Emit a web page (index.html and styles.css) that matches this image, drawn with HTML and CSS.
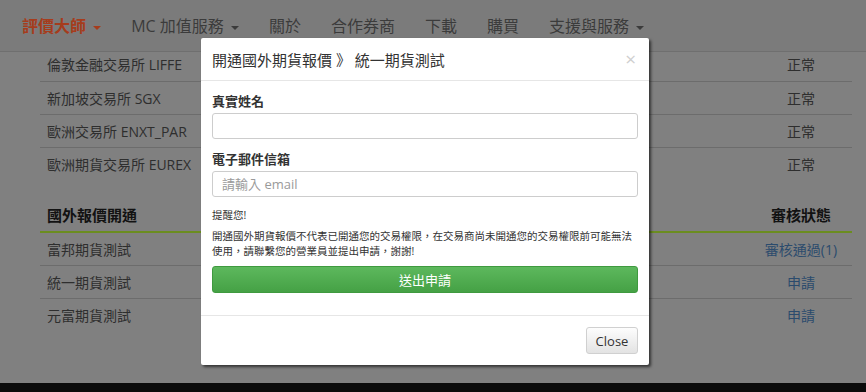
FILE: index.html
```html
<!DOCTYPE html>
<html lang="zh-Hant">
  <head>
    <meta charset="UTF-8" />
    <meta name="viewport" content="width=device-width, initial-scale=1.0" />
    <title>評價大師</title>
    <link rel="stylesheet" href="styles.css">
  </head>
  <body>
    <nav class="topbar">
      <a class="brand">評價大師 <span class="caret"></span></a>
      <a>MC 加值服務 <span class="caret"></span></a>
      <a>關於</a>
      <a>合作券商</a>
      <a>下載</a>
      <a>購買</a>
      <a>支援與服務 <span class="caret"></span></a>
    </nav>

    <main class="content">
      <table class="tbl first">
        <tr><td>倫敦金融交易所 LIFFE</td><td class="stat">正常</td></tr>
        <tr><td>新加坡交易所 SGX</td><td class="stat">正常</td></tr>
        <tr><td>歐洲交易所 ENXT_PAR</td><td class="stat">正常</td></tr>
        <tr><td>歐洲期貨交易所 EUREX</td><td class="stat">正常</td></tr>
      </table>

      <table class="tbl second">
        <tr class="head"><th>國外報價開通</th><th class="stat">審核狀態</th></tr>
        <tr><td>富邦期貨測試</td><td class="stat"><a>審核通過(1)</a></td></tr>
        <tr><td>統一期貨測試</td><td class="stat"><a>申請</a></td></tr>
        <tr><td>元富期貨測試</td><td class="stat"><a>申請</a></td></tr>
      </table>
    </main>
    <footer class="bottombar"></footer>

    <!-- modal -->
    <section class="modal">
      <div class="modal-head">
        <h4>開通國外期貨報價 》 統一期貨測試</h4>
        <span class="luk">&times;</span>
      </div>
      <div class="modal-body">
        <label>真實姓名</label>
        <input type="text">
        <label>電子郵件信箱</label>
        <input type="text" placeholder="請輸入 email">
        <p class="note">提醒您!</p>
        <p class="note-text">開通國外期貨報價不代表已開通您的交易權限，在交易商尚未開通您的交易權限前可能無法使用，請聯繫您的營業員並提出申請，謝謝!</p>
        <button class="send">送出申請</button>
      </div>
      <div class="modal-foot">
        <button class="close">Close</button>
      </div>
    </section>
  </body>
</html>
```
FILE: styles.css
```css
* {
  box-sizing: border-box;
  margin: 0;
}
body {
  height: 392px;
  overflow: hidden;
  display: flex;
  flex-direction: column;
  background-color: #808080;
  font-family: "Open Sans", "Noto Sans CJK TC", sans-serif;
  color: #2e2e2e;
}

/* navigation (dimmed by modal) */
.topbar {
  height: 52px;
  flex-shrink: 0;
  display: flex;
  align-items: center;
  padding: 0 0 1px 7px;
  background-color: #7b7b7b;
  border-bottom: 1px solid #6f6f6f;
  position: relative;
  z-index: 1;
}
.topbar a {
  padding: 0 15px;
  font-size: 16px;
  color: #3b3b3b;
  white-space: nowrap;
}
.topbar a.brand {
  color: #a63c1c;
  font-weight: 600;
}
.caret {
  display: inline-block;
  width: 0;
  height: 0;
  margin-left: 3px;
  vertical-align: middle;
  border-top: 4px solid;
  border-left: 4px solid transparent;
  border-right: 4px solid transparent;
}

/* tables */
.content {
  flex: 1;
  padding: 0 14px 0 40px;
}
.tbl {
  width: 812px;
  border-collapse: collapse;
  font-size: 14px;
}
.tbl td, .tbl th {
  padding: 0 7px;
  height: 33px;
  text-align: left;
}
.tbl tr {
  border-bottom: 1px solid #6c6c6c;
}
.tbl tr:last-child {
  border-bottom: none;
}
.tbl .stat {
  width: 102px;
  text-align: center;
}
.first {
  margin-top: -4px;
}
.second {
  margin-top: 18px;
}
.second tr.head {
  border-bottom: 2px solid #6b8d20;
}
.second th {
  height: 34px;
  font-size: 15px;
  font-weight: 700;
  color: #121212;
}
.stat a {
  color: #2b4b6d;
}
.bottombar {
  height: 9px;
  background-color: #0b0b0b;
}

/* modal */
.modal {
  position: absolute;
  left: 201px;
  top: 38px;
  width: 448px;
  background-color: white;
  border-radius: 2px;
  box-shadow: 2px 2px 3px rgba(0, 0, 0, 0.6);
  z-index: 2;
  color: #333;
}
.modal-head {
  height: 43px;
  display: flex;
  align-items: center;
  justify-content: space-between;
  padding: 0 11px;
  border-bottom: 1px solid #e6e6e6;
}
.modal-head h4 {
  font-size: 15px;
  font-weight: 400;
}
.luk {
  font-size: 19px;
  color: #cfcfcf;
  margin-right: 2px;
  cursor: pointer;
}
.modal-body {
  padding: 11px 11px 22px;
}
.modal-body label {
  display: block;
  font-size: 13px;
  font-weight: 700;
  line-height: 18px;
  margin-bottom: 3px;
}
.modal-body input {
  display: block;
  width: 100%;
  height: 26px;
  padding: 0 9px;
  margin-bottom: 11px;
  border: 1px solid #cdcdcd;
  border-radius: 3px;
  font-family: "Open Sans", "Noto Sans CJK TC", sans-serif;
  font-size: 13px;
  color: #555;
}
.modal-body input::placeholder {
  color: #9a9a9a;
}
.note {
  font-size: 10.5px;
  line-height: 14px;
}
.note-text {
  font-size: 10.5px;
  line-height: 15px;
  margin-top: 7px;
}
.send {
  display: block;
  width: 100%;
  height: 27px;
  margin-top: 7px;
  border: 1px solid #3f9a3f;
  border-radius: 3px;
  background: linear-gradient(#5db85d, #45a145);
  color: white;
  font-family: "Open Sans", "Noto Sans CJK TC", sans-serif;
  font-size: 13px;
}
.modal-foot {
  display: flex;
  justify-content: flex-end;
  padding: 11px;
  border-top: 1px solid #e6e6e6;
}
.close {
  height: 27px;
  width: 52px;
  border: 1px solid #d0d0d0;
  border-radius: 3px;
  background: linear-gradient(#fdfdfd, #e3e3e3);
  color: #333;
  font-family: "Open Sans", "Noto Sans CJK TC", sans-serif;
  font-size: 13px;
}
```
